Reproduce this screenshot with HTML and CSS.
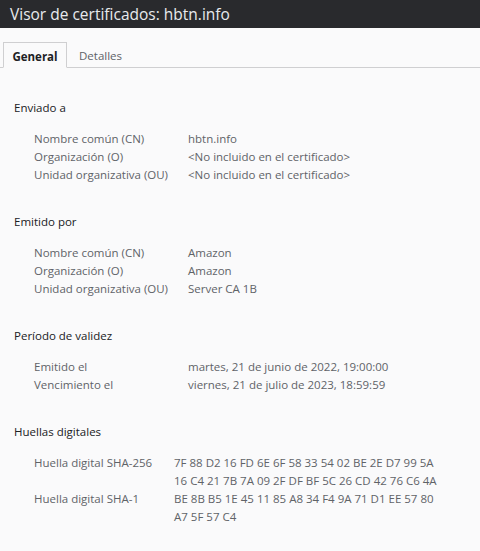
FILE: index.html
```html
<!DOCTYPE html>
<html lang="es">
<head>
<meta charset="utf-8">
<title>Visor de certificados</title>
<link rel="stylesheet" href="styles.css">
</head>
<body>
<header class="titlebar">Visor de certificados: hbtn.info</header>
<nav class="tabs">
  <div class="tab active">General</div>
  <div class="tab">Detalles</div>
</nav>
<main class="content">
  <section class="section">
    <h2 class="heading">Enviado a</h2>
    <div class="rows">
      <div class="label">Nombre común (CN)</div><div class="value">hbtn.info</div>
      <div class="label">Organización (O)</div><div class="value">&lt;No incluido en el certificado&gt;</div>
      <div class="label">Unidad organizativa (OU)</div><div class="value">&lt;No incluido en el certificado&gt;</div>
    </div>
  </section>
  <section class="section">
    <h2 class="heading">Emitido por</h2>
    <div class="rows">
      <div class="label">Nombre común (CN)</div><div class="value">Amazon</div>
      <div class="label">Organización (O)</div><div class="value">Amazon</div>
      <div class="label">Unidad organizativa (OU)</div><div class="value">Server CA 1B</div>
    </div>
  </section>
  <section class="section">
    <h2 class="heading">Período de validez</h2>
    <div class="rows">
      <div class="label">Emitido el</div><div class="value">martes, 21 de junio de 2022, 19:00:00</div>
      <div class="label">Vencimiento el</div><div class="value">viernes, 21 de julio de 2023, 18:59:59</div>
    </div>
  </section>
  <section class="section">
    <h2 class="heading">Huellas digitales</h2>
    <div class="rows fp">
      <div class="label">Huella digital SHA-256</div><div class="value hex">7F 88 D2 16 FD 6E 6F 58 33 54 02 BE 2E D7 99 5A<br>16 C4 21 7B 7A 09 2F DF BF 5C 26 CD 42 76 C6 4A</div>
      <div class="label">Huella digital SHA-1</div><div class="value hex">BE 8B B5 1E 45 11 85 A8 34 F4 9A 71 D1 EE 57 80<br>A7 5F 57 C4</div>
    </div>
  </section>
</main>
</body>
</html>
```
FILE: styles.css
```css
html, body {
  margin: 0;
  padding: 0;
  background: #fafafb;
  font-family: "Open Sans", "Noto Sans", sans-serif;
  font-size: 11.5px;
  color: #202124;
}
.titlebar {
  height: 28px;
  background: #292a2d;
  color: #e8eaed;
  font-size: 15.5px;
  line-height: 28px;
  padding-left: 10px;
  box-sizing: border-box;
}
.tabs {
  display: flex;
  align-items: flex-end;
  height: 40px;
  padding-left: 3px;
  border-bottom: 1px solid #cfcfd1;
  box-sizing: border-box;
}
.tab {
  height: 26px;
  line-height: 27px;
  padding: 0 10px;
  color: #5f6368;
  box-sizing: border-box;
  margin-bottom: -1px;
}
.tab.active {
  width: 64px;
  text-align: center;
  padding: 0;
  font-weight: 700;
  color: #202124;
  border: 1px solid #cfcfd1;
  border-bottom: 1px solid #fafafb;
  background: #fafafb;
}
.tab + .tab {
  padding-left: 12px;
}
.content {
  padding: 31px 0 0 14px;
}
.section {
  margin-bottom: 29px;
}
.heading {
  margin: 0;
  font-size: 11.5px;
  font-weight: 400;
  line-height: 18px;
  color: #202124;
}
.rows {
  display: grid;
  grid-template-columns: 154px 1fr;
  margin-top: 13px;
  padding-left: 20px;
  line-height: 18px;
  color: #5f6368;
}
.rows.fp {
  grid-template-columns: 140px 1fr;
}
```
